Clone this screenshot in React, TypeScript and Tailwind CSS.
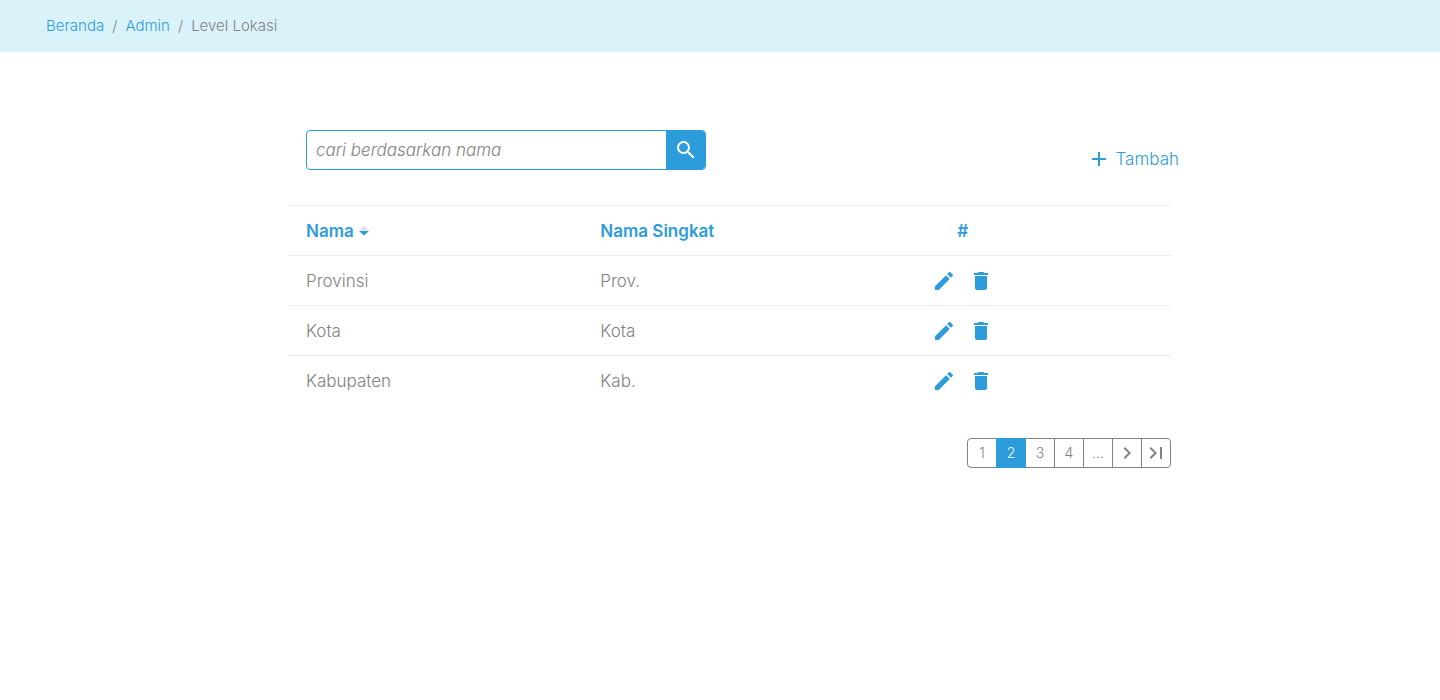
import type { ReactNode } from 'react';
import { MdAdd, MdChevronRight, MdDelete, MdEdit, MdLastPage, MdSearch } from 'react-icons/md';

const rows = [
  { name: 'Provinsi', short: 'Prov.' },
  { name: 'Kota', short: 'Kota' },
  { name: 'Kabupaten', short: 'Kab.' },
];

const pages: { label: string; content: ReactNode }[] = [
  { label: 'Halaman 1', content: '1' },
  { label: 'Halaman 2', content: '2' },
  { label: 'Halaman 3', content: '3' },
  { label: 'Halaman 4', content: '4' },
  { label: 'Halaman lainnya', content: '...' },
  { label: 'Berikutnya', content: <MdChevronRight className="size-6 shrink-0" /> },
  { label: 'Terakhir', content: <MdLastPage className="size-6 shrink-0" /> },
];

function Breadcrumb() {
  return (
    <nav aria-label="Breadcrumb" className="bg-[#daf3fb] px-[46px] py-4 text-[15px] leading-5">
      <ol className="flex gap-2">
        <li><a href="#beranda" className="text-[#2d9cdb]">Beranda</a></li>
        <li aria-hidden="true">/</li>
        <li><a href="#admin" className="text-[#2d9cdb]">Admin</a></li>
        <li aria-hidden="true">/</li>
        <li aria-current="page">Level Lokasi</li>
      </ol>
    </nav>
  );
}

function SortIcon() {
  return (
    <svg viewBox="0 0 10 10" className="size-[10px]" aria-hidden="true">
      <path d="M0 4.500 5 0l5 4.500z" fill="#e0e0e0" />
      <path d="M0 5h10L5 9.500z" fill="#2d9cdb" />
    </svg>
  );
}

export default function App() {
  return (
    <div className="font-['Inter',sans-serif] font-light text-[#828282]">
      <Breadcrumb />
      <main className="mx-auto max-w-[902px] pt-[78px] pl-[19px] text-[17px] leading-6">
        <div className="flex items-start justify-between pl-[18px]">
          <form role="search" className="flex h-10 w-[400px] overflow-hidden rounded border border-[#2d9cdb]" onSubmit={(e) => e.preventDefault()}>
            <input
              type="search"
              aria-label="Cari berdasarkan nama"
              placeholder="cari berdasarkan nama"
              className="min-w-0 flex-1 px-[9px] italic outline-none placeholder:text-[#828282]"
            />
            <button type="submit" aria-label="Cari" className="flex w-[39px] items-center justify-center bg-[#2d9cdb] text-white">
              <MdSearch className="size-6" />
            </button>
          </form>
          <button type="button" className="-mr-2 mt-[17px] flex items-center gap-[5px] text-[#2d9cdb]">
            <MdAdd className="size-6" />
            Tambah
          </button>
        </div>
        <table className="mt-[34px] w-full table-fixed text-left">
          <thead>
            <tr className="h-[50px] border-t border-[#ededed] text-[#2d9cdb]">
              <th scope="col" className="pl-[18px] font-semibold">
                <button type="button" className="flex items-center gap-[5px]">
                  Nama
                  <SortIcon />
                </button>
              </th>
              <th scope="col" className="pl-[18px] font-semibold">Nama Singkat</th>
              <th scope="col" className="pr-[122px] text-center font-semibold">#</th>
            </tr>
          </thead>
          <tbody>
            {rows.map((row) => (
              <tr key={row.name} className="h-[50px] border-t border-[#ededed]">
                <td className="pl-[18px]">{row.name}</td>
                <td className="pl-[18px]">{row.short}</td>
                <td className="pr-[122px]">
                  <div className="flex justify-center gap-[13px] text-[#2d9cdb]">
                    <button type="button" aria-label={`Ubah ${row.name}`}><MdEdit className="size-6" /></button>
                    <button type="button" aria-label={`Hapus ${row.name}`}><MdDelete className="size-6" /></button>
                  </div>
                </td>
              </tr>
            ))}
          </tbody>
        </table>
        <nav aria-label="Halaman" className="mt-8 flex justify-end">
          <ul className="flex text-[14px]">
            {pages.map((page, i) => (
              <li key={page.label} className="group -ml-px">
                <button
                  type="button"
                  aria-label={page.label}
                  aria-current={i === 1 ? 'page' : undefined}
                  className="relative flex h-[30px] w-[30px] items-center justify-center border border-[#828282] group-first:rounded-l group-last:rounded-r aria-[current=page]:z-10 aria-[current=page]:border-[#2d9cdb] aria-[current=page]:bg-[#2d9cdb] aria-[current=page]:text-white"
                >
                  {page.content}
                </button>
              </li>
            ))}
          </ul>
        </nav>
      </main>
    </div>
  );
}
